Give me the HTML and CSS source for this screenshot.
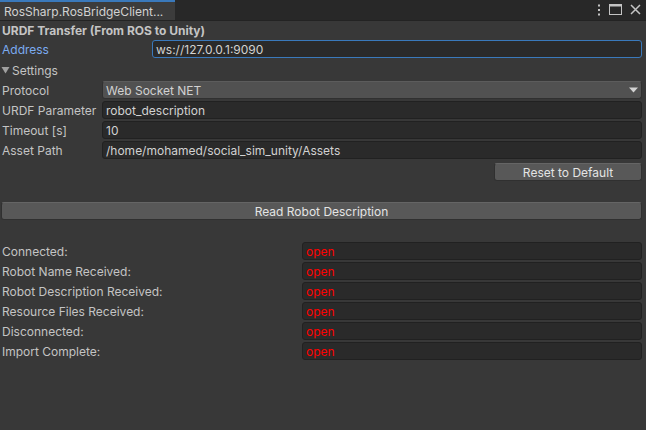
FILE: index.html
```html
<!DOCTYPE html>
<html>
<head>
<meta charset="utf-8">
<link rel="stylesheet" href="styles.css">
</head>
<body>
<div class="window">
  <div class="tabbar">
    <div class="tab">RosSharp.RosBridgeClient...</div>
    <div class="tab-icons">
      <svg width="4" height="12" viewBox="0 0 4 12"><rect x="1" y="0.5" width="2" height="2" fill="#c4c4c4"/><rect x="1" y="5" width="2" height="2" fill="#c4c4c4"/><rect x="1" y="9.5" width="2" height="2" fill="#c4c4c4"/></svg>
      <svg width="13" height="11" viewBox="0 0 13 11"><rect x="0.5" y="0.5" width="12" height="10" fill="none" stroke="#c4c4c4"/><rect x="0.5" y="0.5" width="12" height="2" fill="#c4c4c4"/></svg>
      <svg width="11" height="11" viewBox="0 0 11 11"><path d="M1 1 L10 10 M10 1 L1 10" stroke="#c4c4c4" stroke-width="1.5"/></svg>
    </div>
  </div>
  <div class="content">
    <div class="title">URDF Transfer (From ROS to Unity)</div>
    <div class="row addr">
      <div class="label focus w150">Address</div>
      <div class="field focused">ws://127.0.0.1:9090</div>
    </div>
    <div class="foldout">
      <svg width="9" height="8" viewBox="0 0 9 8"><path d="M0.5 1 L8.5 1 L4.5 7.5 Z" fill="#a0a0a0"/></svg>
      <span>Settings</span>
    </div>
    <div class="group">
      <div class="row">
        <div class="label w100">Protocol</div>
        <div class="dropdown">Web Socket NET
          <svg class="arrow" width="9" height="6" viewBox="0 0 9 6"><path d="M0 0.5 L9 0.5 L4.5 5.5 Z" fill="#d2d2d2"/></svg>
        </div>
      </div>
      <div class="row">
        <div class="label w100">URDF Parameter</div>
        <div class="field">robot_description</div>
      </div>
      <div class="row">
        <div class="label w100">Timeout [s]</div>
        <div class="field">10</div>
      </div>
      <div class="row">
        <div class="label w100">Asset Path</div>
        <div class="field">/home/mohamed/social_sim_unity/Assets</div>
      </div>
    </div>
    <div class="reset-wrap">
      <div class="button reset">Reset to Default</div>
    </div>
    <div class="button read">Read Robot Description</div>
    <div class="group status">
      <div class="row">
        <div class="label w300">Connected:</div>
        <div class="field red">open</div>
      </div>
      <div class="row">
        <div class="label w300">Robot Name Received:</div>
        <div class="field red">open</div>
      </div>
      <div class="row">
        <div class="label w300">Robot Description Received:</div>
        <div class="field red">open</div>
      </div>
      <div class="row">
        <div class="label w300">Resource Files Received:</div>
        <div class="field red">open</div>
      </div>
      <div class="row">
        <div class="label w300">Disconnected:</div>
        <div class="field red">open</div>
      </div>
      <div class="row">
        <div class="label w300">Import Complete:</div>
        <div class="field red">open</div>
      </div>
    </div>
  </div>
</div>
</body>
</html>
```

FILE: styles.css
```css
* { box-sizing: border-box; }
html, body {
  margin: 0;
  padding: 0;
  background: #383838;
  width: 646px;
  height: 430px;
  overflow: hidden;
}
body {
  font-family: Inter, "Noto Sans", "Liberation Sans", sans-serif;
  font-size: 12px;
  color: #c4c4c4;
}
.window {
  width: 646px;
  height: 430px;
  display: flex;
  flex-direction: column;
}
.tabbar {
  height: 21px;
  background: #282828;
  border-bottom: 1px solid #232323;
  display: flex;
  align-items: stretch;
  justify-content: space-between;
}
.tab {
  width: 175px;
  background: #3c3c3c;
  border-top: 2px solid #3a79bb;
  padding-left: 4px;
  display: flex;
  align-items: center;
  color: #d2d2d2;
  height: 20px;
}
.tab-icons {
  display: flex;
  align-items: center;
  gap: 8px;
  padding-right: 5px;
  padding-bottom: 1px;
}
.content {
  padding: 0 4px 0 2px;
  display: flex;
  flex-direction: column;
}
.title {
  height: 19px;
  font-weight: 700;
  display: flex;
  align-items: center;
  color: #c4c4c4;
}
.row {
  height: 18px;
  display: flex;
  align-items: stretch;
}
.label {
  flex: none;
  display: flex;
  align-items: center;
  white-space: nowrap;
}
.w100 { width: 100px; }
.w150 { width: 150px; }
.w300 { width: 300px; }
.label.focus { color: #7babf1; }
.field {
  flex: 1;
  background: #2a2a2a;
  border: 1px solid #212121;
  border-radius: 3px;
  padding-left: 3px;
  display: flex;
  align-items: center;
  color: #d2d2d2;
  white-space: nowrap;
}
.field.focused {
  border-color: #3a79bb;
}
.field.red {
  color: #ff0000;
}
.foldout {
  height: 20px;
  margin-top: 2px;
  display: flex;
  align-items: center;
  gap: 2px;
  padding-left: 0;
}
.foldout svg { margin-left: -1px; }
.group {
  display: flex;
  flex-direction: column;
  gap: 2px;
  margin-top: 1px;
}
.dropdown {
  flex: 1;
  background: #515151;
  border: 1px solid #303030;
  border-top-color: #5c5c5c;
  border-radius: 3px;
  padding-left: 3px;
  display: flex;
  align-items: center;
  justify-content: space-between;
  padding-right: 3px;
  color: #d2d2d2;
}
.button {
  height: 18px;
  background: #585858;
  border: 1px solid #303030;
  border-top-color: #656565;
  border-radius: 3px;
  display: flex;
  align-items: center;
  justify-content: center;
  color: #e4e4e4;
}
.reset-wrap {
  display: flex;
  justify-content: flex-end;
  margin-top: 4px;
}
.reset { width: 148px; }
.read {
  margin-top: 21px;
  margin-left: -1px;
}
.status {
  margin-top: 22px;
}
```
